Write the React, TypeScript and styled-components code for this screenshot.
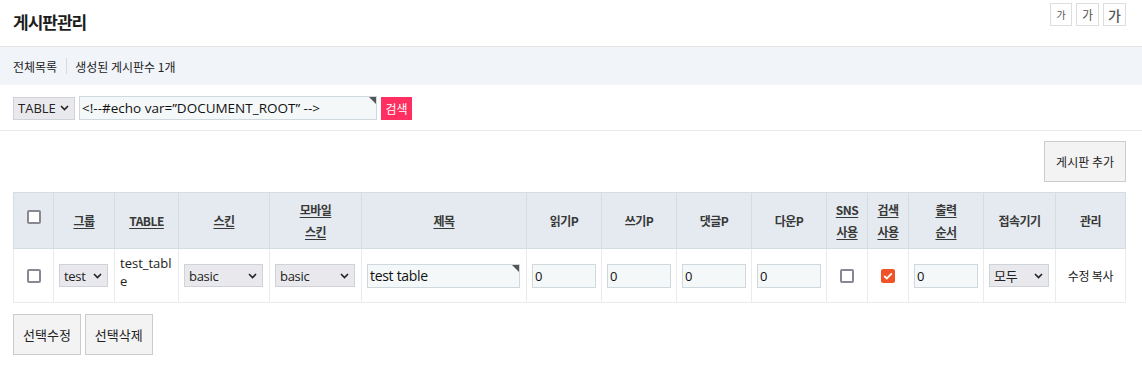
import styled, { createGlobalStyle } from 'styled-components';

const GlobalStyle = createGlobalStyle`
  body {
    margin: 0;
    background: #fff;
    font-family: "Noto Sans CJK KR", "Noto Sans", sans-serif;
    color: #222;
    font-size: 12px;
  }
  * { box-sizing: border-box; }
`;

const columns = [40, 61, 64, 91, 92, 165, 75, 75, 75, 75, 41, 41, 75, 72, 70];

const App = () => {
  return (
    <Page>
      <GlobalStyle />
      <Header>
        <Title>게시판관리</Title>
        <FontSizes>
          <FontButton size={10}>가</FontButton>
          <FontButton size={12}>가</FontButton>
          <FontButton size={14}>가</FontButton>
        </FontSizes>
      </Header>
      <InfoBar>
        <span>전체목록</span>
        <Divider />
        <span>생성된 게시판수 1개</span>
      </InfoBar>
      <SearchRow>
        <Select width={62}>
          <span>TABLE</span>
          <Chevron />
        </Select>
        <TextBox width={298} marked fontSize={13.5}>{'<!--#echo var=”DOCUMENT_ROOT” -->'}</TextBox>
        <SearchButton>검색</SearchButton>
      </SearchRow>
      <Actions>
        <GreyButton>게시판 추가</GreyButton>
      </Actions>
      <Table>
        <colgroup>
          {columns.map((w, i) => (
            <col key={i} style={{ width: w }} />
          ))}
        </colgroup>
        <thead>
          <tr>
            <Th><HeadCheck><Check /></HeadCheck></Th>
            <Th><Link>그룹</Link></Th>
            <Th><Link>TABLE</Link></Th>
            <Th><Link>스킨</Link></Th>
            <Th><Link>모바일<br />스킨</Link></Th>
            <Th><Link>제목</Link></Th>
            <Th>읽기P</Th>
            <Th>쓰기P</Th>
            <Th>댓글P</Th>
            <Th>다운P</Th>
            <Th><Link>SNS<br />사용</Link></Th>
            <Th><Link>검색<br />사용</Link></Th>
            <Th><Link>출력<br />순서</Link></Th>
            <Th>접속기기</Th>
            <Th>관리</Th>
          </tr>
        </thead>
        <tbody>
          <tr>
            <Td center><Check /></Td>
            <Td>
              <Select width={49}>
                <span>test</span>
                <Chevron />
              </Select>
            </Td>
            <Td><WrapText>test_tabl<br />e</WrapText></Td>
            <Td>
              <Select width={79}>
                <span>basic</span>
                <Chevron />
              </Select>
            </Td>
            <Td>
              <Select width={80}>
                <span>basic</span>
                <Chevron />
              </Select>
            </Td>
            <Td><TextBox width={153} marked fontSize={14}>test table</TextBox></Td>
            <Td><TextBox width={64}>0</TextBox></Td>
            <Td><TextBox width={64}>0</TextBox></Td>
            <Td><TextBox width={64}>0</TextBox></Td>
            <Td><TextBox width={64}>0</TextBox></Td>
            <Td center><Check /></Td>
            <Td center><Check checked /></Td>
            <Td><TextBox width={64}>0</TextBox></Td>
            <Td>
              <Select width={60}>
                <span>모두</span>
                <Chevron />
              </Select>
            </Td>
            <Td center>수정 복사</Td>
          </tr>
        </tbody>
      </Table>
      <BottomActions>
        <GreyButton large>선택수정</GreyButton>
        <GreyButton large>선택삭제</GreyButton>
      </BottomActions>
    </Page>
  );
};

const Chevron = () => (
  <svg width="9" height="6" viewBox="0 0 9 6">
    <path d="M1 1 L4.5 4.5 L8 1" fill="none" stroke="#222" strokeWidth="1.6" />
  </svg>
);

const Check = ({ checked }: { checked?: boolean }) => (
  <CheckBox checked={checked}>
    {checked && (
      <svg width="10" height="8" viewBox="0 0 10 8">
        <path d="M1.2 4 L3.8 6.4 L8.8 1.4" fill="none" stroke="#fff" strokeWidth="1.8" />
      </svg>
    )}
  </CheckBox>
);

export default App;

const Page = styled.div`
  width: 1142px;
  height: 368px;
  overflow: hidden;
`;

const Header = styled.div`
  height: 47px;
  display: flex;
  justify-content: space-between;
  padding: 3px 16px 0 13px;
  border-bottom: 1px solid #e3e3e3;
`;

const Title = styled.h1`
  margin: 0;
  padding-top: 6px;
  font-size: 17px;
  font-weight: 700;
  color: #1d1d1d;
  letter-spacing: -1px;
  line-height: 26px;
`;

const FontSizes = styled.div`
  display: flex;
  gap: 4px;
  align-items: flex-start;
`;

const FontButton = styled.div<{ size: number }>`
  width: ${p => (p.size === 10 ? 22 : 23)}px;
  height: 23px;
  border: 1px solid #ddd;
  background: #fff;
  color: #555;
  font-size: ${p => p.size}px;
  font-weight: ${p => (p.size === 14 ? 500 : 400)};
  display: flex;
  align-items: center;
  justify-content: center;
`;

const InfoBar = styled.div`
  height: 38px;
  background: #f1f4f9;
  display: flex;
  align-items: center;
  padding-left: 13px;
  font-size: 12px;
  color: #222;
`;

const Divider = styled.span`
  width: 1px;
  height: 16px;
  background: #d6d9de;
  margin: 0 8px 0 9px;
`;

const SearchRow = styled.div`
  display: flex;
  align-items: center;
  gap: 4px;
  padding: 11px 13px 10px;
  border-bottom: 1px solid #e9e9e9;
`;

const Select = styled.div<{ width: number }>`
  width: ${p => p.width}px;
  height: 23px;
  background: #e9e9ed;
  border: 1px solid #cdd3d8;
  display: flex;
  align-items: center;
  justify-content: space-between;
  padding: 0 5px 0 4px;
  font-family: "Open Sans", "Noto Sans CJK KR", sans-serif;
  font-size: 13px;
  color: #222;
`;

const TextBox = styled.div<{ width: number; marked?: boolean; fontSize?: number }>`
  position: relative;
  width: ${p => p.width}px;
  height: 24px;
  background: #f5f8f9;
  border: 1px solid #cfd8dc;
  padding: 0 2px;
  display: flex;
  align-items: center;
  font-family: "Open Sans", "Noto Sans CJK KR", sans-serif;
  font-size: ${p => p.fontSize ?? 13}px;
  color: #111;
  white-space: nowrap;
  overflow: hidden;
  &::after {
    content: '';
    display: ${p => (p.marked ? 'block' : 'none')};
    position: absolute;
    top: 0;
    right: 0;
    border-top: 7px solid #555;
    border-left: 7px solid transparent;
  }
`;

const SearchButton = styled.div`
  width: 31px;
  height: 23px;
  background: #ff3061;
  color: #fff;
  font-size: 12px;
  display: flex;
  align-items: center;
  justify-content: center;
`;

const Actions = styled.div`
  display: flex;
  justify-content: flex-end;
  padding: 10px 16px 10px;
`;

const GreyButton = styled.div<{ large?: boolean }>`
  height: 41px;
  padding: 0 ${p => (p.large ? 9 : 11)}px;
  background: #f3f3f3;
  border: 1px solid #ccc;
  display: flex;
  align-items: center;
  font-size: ${p => (p.large ? 13 : 12)}px;
  color: #222;
`;

const Table = styled.table`
  margin-left: 13px;
  width: 1112px;
  border-collapse: collapse;
  table-layout: fixed;
`;

const Th = styled.th`
  height: 56px;
  background: #e4eaef;
  border: 1px solid #d4dde2;
  font-size: 12px;
  font-weight: 700;
  color: #383838;
  text-align: center;
  line-height: 22px;
  letter-spacing: -0.5px;
`;

const HeadCheck = styled.div`
  display: flex;
  justify-content: center;
  transform: translateY(-4px);
`;

const Link = styled.span`
  text-decoration: underline;
  text-underline-offset: 2px;
`;

const Td = styled.td<{ center?: boolean }>`
  height: 54px;
  border: 1px solid #e9ecef;
  padding: 0 5px;
  text-align: ${p => (p.center ? 'center' : 'left')};
  font-size: 12px;
  letter-spacing: -0.3px;
  color: #222;
  vertical-align: middle;
  & > * {
    margin: ${p => (p.center ? '0 auto' : '0')};
  }
`;

const WrapText = styled.div`
  font-family: "Open Sans", "Noto Sans CJK KR", sans-serif;
  font-size: 13px;
  line-height: 18px;
  letter-spacing: 0;
  margin-top: -8px !important;
`;

const CheckBox = styled.div<{ checked?: boolean }>`
  width: 14px;
  height: 14px;
  border-radius: 2px;
  border: ${p => (p.checked ? 'none' : '2px solid #8a8792')};
  background: ${p => (p.checked ? '#ee5428' : '#fff')};
  display: flex;
  align-items: center;
  justify-content: center;
`;

const BottomActions = styled.div`
  display: flex;
  gap: 4px;
  padding: 11px 13px;
`;
